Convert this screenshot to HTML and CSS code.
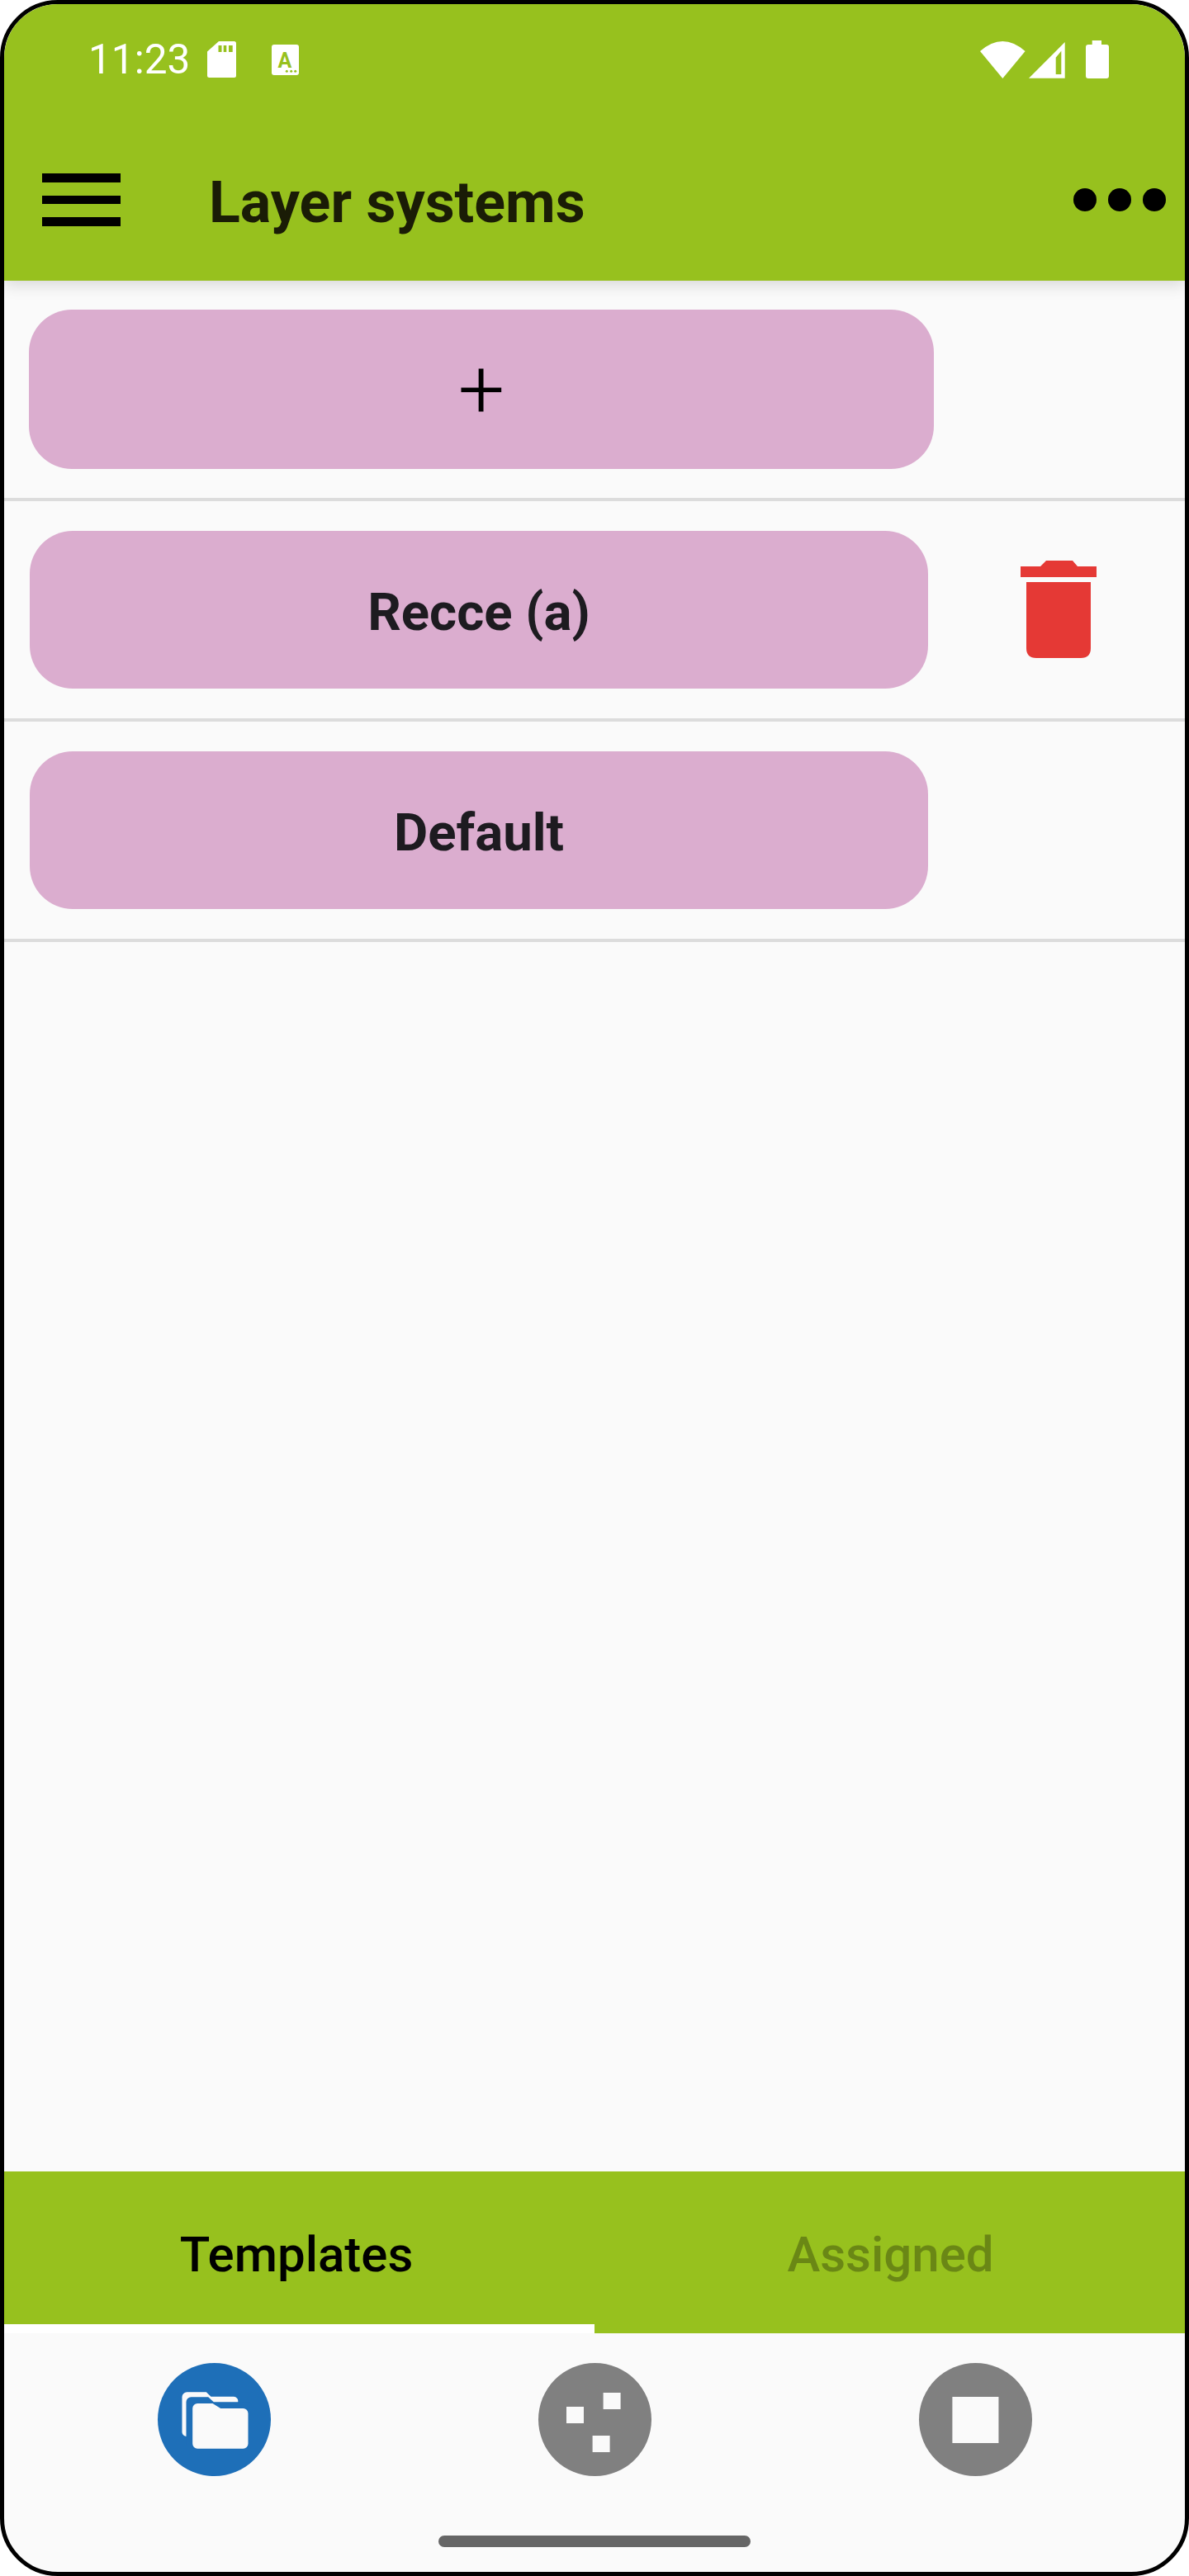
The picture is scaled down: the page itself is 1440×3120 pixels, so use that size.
FILE: index.html
```html
<!DOCTYPE html>
<html lang="en">
<head>
    <meta charset="UTF-8">
    <meta name="viewport" content="width=device-width, initial-scale=1.0">
    <title>Layer systems</title>
    <link rel="stylesheet" href="styles.css">
</head>
<body>
    <div class="phone">
        <div class="camera"></div>

        <header class="appbar">
            <div class="status-bar">
                <span class="clock">11:23</span>
                <svg class="ic-sd" width="35" height="44" viewBox="0 0 35 44">
                    <path d="M0 12.5 14 0H32.500Q35 0 35 2.500V41.500Q35 44 32.500 44H2.500Q0 44 0 41.500Z" fill="#fff"/>
                    <rect x="13.500" y="5" width="4" height="8" fill="#97c11e"/>
                    <rect x="19.700" y="5" width="3.600" height="8" fill="#97c11e"/>
                    <rect x="26" y="5" width="4.700" height="8" fill="#97c11e"/>
                </svg>
                <svg class="ic-keyboard" width="33" height="37" viewBox="0 0 33 37">
                    <rect width="33" height="37" rx="3" fill="#fff"/>
                    <text x="16" y="28" text-anchor="middle" class="ic-letter">A</text>
                    <circle cx="18.300" cy="32.300" r="1.500" fill="#97c11e"/>
                    <circle cx="23.700" cy="32.300" r="1.500" fill="#97c11e"/>
                    <circle cx="28.700" cy="32.300" r="1.500" fill="#97c11e"/>
                </svg>
                <div class="status-right">
                    <svg width="55" height="45" viewBox="0 0 55 45">
                        <path d="M27.300 45 0 12Q27.300-12 54.600 12Z" fill="#fff"/>
                    </svg>
                    <svg width="44" height="44" viewBox="0 0 44 44">
                        <path d="M43.700 0V43.700H0Z" fill="#fff"/>
                        <path d="M32.700 18.700 39.300 10.700V39H32.700Z" fill="#97c11e"/>
                    </svg>
                    <svg class="ic-battery" width="28" height="46" viewBox="0 0 28 46">
                        <path d="M7.700 0H19V5H25Q28 5 28 8V43Q28 46 25 46H3Q0 46 0 43V8Q0 5 3 5H7.700Z" fill="#fff"/>
                    </svg>
                </div>
            </div>
            <div class="toolbar">
                <div class="hamburger"><span></span><span></span><span></span></div>
                <h1 class="title">Layer systems</h1>
                <div class="more"><span></span><span></span><span></span></div>
            </div>
        </header>

        <main class="list">
            <div class="row row-add">
                <button class="pill pill-add">+</button>
            </div>
            <div class="row">
                <button class="pill">Recce (a)</button>
                <svg class="trash" width="92" height="118" viewBox="0 0 92 118">
                    <path d="M0 7H24L31 0H63L69 7H92V20H0Z" fill="#e53935"/>
                    <path d="M7 26H85V106Q85 118 73 118H19Q7 118 7 106Z" fill="#e53935"/>
                </svg>
            </div>
            <div class="row">
                <button class="pill">Default</button>
            </div>
        </main>

        <nav class="tabs">
            <div class="tab tab-active">Templates</div>
            <div class="tab">Assigned</div>
        </nav>

        <footer class="bottom">
            <div class="bottom-btns">
                <div class="round round-on">
                    <svg width="137" height="137" viewBox="0 0 137 137">
                        <path d="M29.500 41A6 6 0 0 1 35.500 35.300H58.800L64.500 40.700H92A5.500 5.500 0 0 1 97.200 47.300V60H35V89A5.500 5.500 0 0 1 29.500 84Z" fill="#fafafa"/>
                        <path d="M34.500 100V47.300A6 6 0 0 1 40.500 41.300H61.200L67.800 47.300H112V100Z" fill="#1e6fb8"/>
                        <path d="M42.200 55A6 6 0 0 1 48.200 49H66.500L76.200 55H103.500A6 6 0 0 1 109.500 61V97.700A6 6 0 0 1 103.500 103.700H48.200A6 6 0 0 1 42.200 97.700Z" fill="#fafafa"/>
                    </svg>
                </div>
                <div class="round">
                    <svg width="137" height="137" viewBox="0 0 137 137">
                        <rect x="34" y="53" width="21" height="20" fill="#fafafa"/>
                        <rect x="78.600" y="36" width="21" height="20" fill="#fafafa"/>
                        <rect x="65.600" y="88" width="21" height="20" fill="#fafafa"/>
                    </svg>
                </div>
                <div class="round">
                    <svg width="137" height="137" viewBox="0 0 137 137">
                        <rect x="40.400" y="41" width="56" height="56" fill="#fafafa"/>
                    </svg>
                </div>
            </div>
            <div class="home-bar"></div>
        </footer>
    </div>
</body>
</html>
```

FILE: styles.css
```css
:root {
    --green: #97c11e;
    --pink: #dbadcf;
    --page: #fafafa;
}

html, body {
    margin: 0;
    background: #fff;
}

.phone {
    position: relative;
    box-sizing: border-box;
    width: 1440px;
    height: 3120px;
    display: flex;
    flex-direction: column;
    background: var(--page);
    border: 5px solid #000;
    border-radius: 70px;
    overflow: hidden;
    font-family: Roboto, sans-serif;
}

.camera {
    position: absolute;
    top: 24px;
    left: 672px;
    width: 86px;
    height: 86px;
    border-radius: 50%;
    background: #000;
}

/* top bar */
.appbar {
    position: relative;
    z-index: 2;
    height: 335px;
    background: var(--green);
    box-shadow: 0 5px 18px rgba(0, 0, 0, 0.14);
}

.status-bar {
    height: 134px;
    display: flex;
    align-items: center;
    padding: 0 92px 0 102px;
}

.clock {
    color: #fff;
    font-size: 49.500px;
    font-weight: 400;
}

.ic-sd {
    margin-left: 21px;
}

.ic-keyboard {
    margin-left: 43px;
}

.ic-letter {
    font-family: Roboto, sans-serif;
    font-size: 25px;
    font-weight: 700;
    fill: #97c11e;
}

.status-right {
    margin-left: auto;
    display: flex;
    align-items: flex-end;
    gap: 4px;
}

.ic-battery {
    margin-left: 21px;
}

.toolbar {
    height: 196px;
    padding-top: 5px;
    display: flex;
    align-items: center;
}

.hamburger {
    margin-left: 46px;
    width: 95px;
    display: flex;
    flex-direction: column;
    gap: 16px;
}

.hamburger span {
    height: 10.500px;
    background: #000;
}

.title {
    margin: 6px 0 0 107px;
    font-size: 70px;
    font-weight: 700;
    color: #1a1c06;
}

.more {
    margin-left: auto;
    margin-right: 23px;
    display: flex;
    gap: 14px;
}

.more span {
    width: 28px;
    height: 28px;
    border-radius: 50%;
    background: #000;
}

/* list */
.list {
    flex: 1;
}

.row {
    box-sizing: border-box;
    height: 267px;
    padding: 36px 0 36px 31px;
    display: flex;
    align-items: flex-start;
    border-bottom: 4px solid #dcdcdc;
}

.row-add {
    padding: 35px 0 35px 30px;
}

.pill {
    width: 1088px;
    height: 191px;
    padding: 5px 0 0;
    border: 0;
    border-radius: 52px;
    background: var(--pink);
    color: #1d1b20;
    font-family: Roboto, sans-serif;
    font-size: 63.500px;
    font-weight: 700;
}

.pill-add {
    width: 1096px;
    height: 193px;
    padding: 0;
    color: #000;
    font-size: 100px;
    font-weight: 350;
}

.trash {
    margin: 36px 0 0 112px;
}

/* tabs */
.tabs {
    height: 196px;
    display: flex;
    background: var(--green);
}

.tab {
    flex: 0 0 50%;
    box-sizing: border-box;
    padding: 65px 0 0 2px;
    text-align: center;
    font-size: 60px;
    font-weight: 500;
    color: #6a8715;
}

.tab-active {
    padding: 65px 7px 0 0;
    color: #000;
    border-bottom: 11px solid #fff;
}

/* bottom buttons */
.bottom {
    height: 289px;
    display: flex;
    flex-direction: column;
    align-items: center;
}

.bottom-btns {
    box-sizing: border-box;
    width: 100%;
    padding: 36px 185px 0 185.500px;
    display: flex;
    justify-content: space-between;
}

.round {
    width: 137px;
    height: 137px;
    border-radius: 50%;
    background: #808080;
}

.round-on {
    background: #1e6fb8;
}

.round svg {
    display: block;
}

.home-bar {
    margin-top: 72px;
    width: 378px;
    height: 14px;
    border-radius: 7px;
    background: #666;
}
```
